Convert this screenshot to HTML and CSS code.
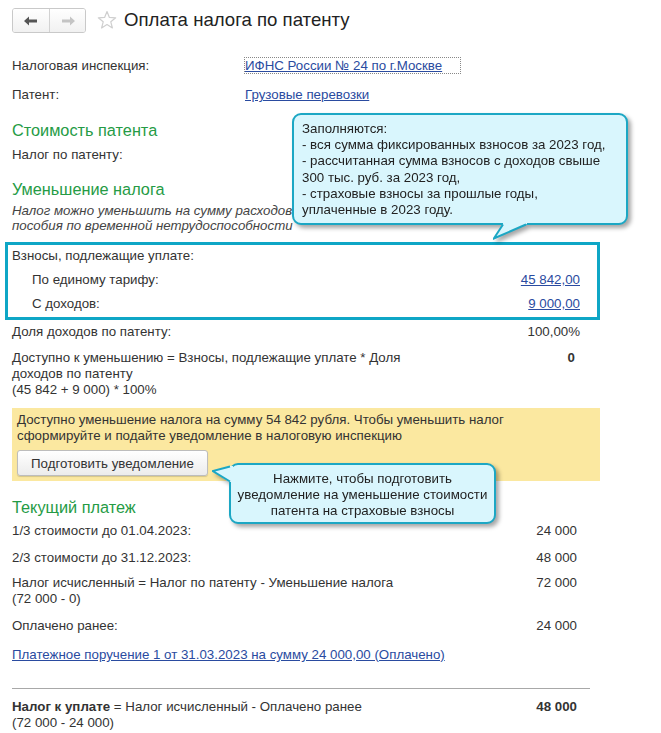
FILE: index.html
```html
<!DOCTYPE html>
<html lang="ru">
<head>
  <meta charset="UTF-8">
  <title>Оплата налога по патенту</title>
  <link rel="stylesheet" href="styles.css">
</head>
<body>
  <div class="page">
    <header class="head">
      <div class="nav">
        <button class="nav-btn">
          <svg width="14" height="10" viewBox="0 0 14 10"><path d="M0 5 L5 0.5 L5 3.5 L13 3.5 L13 6.5 L5 6.5 L5 9.5 Z" fill="#555"/></svg>
        </button>
        <button class="nav-btn">
          <svg width="14" height="10" viewBox="0 0 14 10"><path d="M14 5 L9 0.5 L9 3.5 L1 3.5 L1 6.5 L9 6.5 L9 9.5 Z" fill="#c4c4c4"/></svg>
        </button>
      </div>
      <svg class="star" width="20" height="20" viewBox="0 0 20 20"><path d="M10 1.5 L12.4 7.4 L18.7 7.8 L13.8 11.8 L15.4 18 L10 14.5 L4.6 18 L6.2 11.8 L1.3 7.8 L7.6 7.4 Z" fill="none" stroke="#cfcfcf" stroke-width="1.2" stroke-linejoin="round"/></svg>
      <h1 class="title">Оплата налога по патенту</h1>
    </header>

    <div class="form">
      <div class="field f-ifns">
        <span class="label">Налоговая инспекция:</span>
        <span class="focus"><a href="#" class="link">ИФНС России № 24 по г.Москве</a></span>
      </div>
      <div class="field f-patent">
        <span class="label">Патент:</span>
        <a href="#" class="link">Грузовые перевозки</a>
      </div>

      <h2 class="group h-cost">Стоимость патента</h2>
      <div class="row r-tax"><span>Налог по патенту:</span></div>

      <h2 class="group h-reduce">Уменьшение налога</h2>
      <p class="note">Налог можно уменьшить на сумму расходов<br>пособия по временной нетрудоспособности</p>

      <div class="hl">
        <div class="row">Взносы, подлежащие уплате:</div>
        <div class="row sub gap8"><span>По единому тарифу:</span><a href="#" class="link">45 842,00</a></div>
        <div class="row sub gap8"><span>С доходов:</span><a href="#" class="link">9 000,00</a></div>
      </div>

      <div class="row r-share"><span>Доля доходов по патенту:</span><span class="val">100,00%</span></div>
      <div class="row r-avail">
        <span>Доступно к уменьшению = Взносы, подлежащие уплате * Доля<br>доходов по патенту<br>(45 842 + 9 000) * 100%</span>
        <b class="val zero">0</b>
      </div>

      <div class="warn">
        <p>Доступно уменьшение налога на сумму 54 842 рубля. Чтобы уменьшить налог<br>сформируйте и подайте уведомление в налоговую инспекцию</p>
        <button class="btn">Подготовить уведомление</button>
      </div>

      <h2 class="group h-pay">Текущий платеж</h2>
      <div class="row r-1"><span>1/3 стоимости до 01.04.2023:</span><span class="val">24 000</span></div>
      <div class="row r-2"><span>2/3 стоимости до 31.12.2023:</span><span class="val">48 000</span></div>
      <div class="row r-3"><span>Налог исчисленный = Налог по патенту - Уменьшение налога<br>(72 000 - 0)</span><span class="val">72 000</span></div>
      <div class="row r-4"><span>Оплачено ранее:</span><span class="val">24 000</span></div>
      <div class="row r-link"><a href="#" class="link">Платежное поручение 1 от 31.03.2023 на сумму 24 000,00 (Оплачено)</a></div>
      <hr class="sep">
      <div class="row r-total"><span><b>Налог к уплате</b> = Налог исчисленный - Оплачено ранее<br>(72 000 - 24 000)</span><b class="val">48 000</b></div>
    </div>

    <!-- подсказки -->
    <div class="tip tip-top">
      Заполняются:<br>
      - вся сумма фиксированных взносов за 2023 год,<br>
      - рассчитанная сумма взносов с доходов свыше<br>
      300 тыс. руб. за 2023 год,<br>
      - страховые взносы за прошлые годы,<br>
      уплаченные в 2023 году.
      <svg class="tail tail-down" width="40" height="24" viewBox="0 0 40 24">
        <polygon points="10,0 10,3 0.5,18 34,3 34,0" fill="#d9f6fd"/>
        <polyline points="10,3.5 0.8,17.5 33,3.5" fill="none" stroke="#1ca7c4" stroke-width="2"/>
      </svg>
    </div>
    <div class="tip tip-btn">
      Нажмите, чтобы подготовить<br>
      уведомление на уменьшение стоимости<br>
      патента на страховые взносы
      <svg class="tail tail-left" width="24" height="22" viewBox="0 0 24 22">
        <polygon points="17,1 0.5,6 17,17 21,17 21,1" fill="#d9f6fd"/>
        <polyline points="18,1.5 0.8,6 18,16.5" fill="none" stroke="#1ca7c4" stroke-width="2"/>
      </svg>
    </div>
  </div>
</body>
</html>
```

FILE: styles.css
```css
* { box-sizing: border-box; margin: 0; padding: 0; }
body {
  background: #fff;
  font-family: "Liberation Sans", Arial, sans-serif;
  font-size: 13.3px;
  line-height: 16px;
  color: #333;
}
.page {
  position: relative;
  width: 661px;
  height: 733px;
  overflow: hidden;
}

/* шапка */
.head {
  height: 40px;
  display: flex;
  align-items: center;
  padding: 0 0 0 12px;
}
.nav {
  display: flex;
  height: 25px;
  margin-top: 1px;
  border: 1px solid #c9c9c9;
  border-radius: 3px;
  overflow: hidden;
}
.nav-btn {
  width: 36px;
  border: none;
  background: linear-gradient(#fff, #f1f1f1);
  display: flex;
  align-items: center;
  justify-content: center;
}
.nav-btn + .nav-btn { border-left: 1px solid #d2d2d2; }
.star { margin-left: 11px; }
.title {
  margin-left: 7px;
  font-size: 18.6px;
  font-weight: normal;
  color: #222;
}

/* форма */
.form {
  width: 580px;
  padding-left: 12px;
}
.field { display: flex; }
.label { width: 233px; }
.f-ifns { margin-top: 18px; }
.f-patent { margin-top: 13px; }
.focus {
  outline: 1px dotted #888;
  outline-offset: 0;
  width: 215px;
  height: 15px;
  line-height: 15px;
}
.link {
  color: #2a4ba0;
  text-decoration: underline;
}
.group {
  font-size: 16.3px;
  line-height: 20px;
  font-weight: normal;
  color: #259b45;
}
.h-cost { margin-top: 17px; }
.h-reduce { margin-top: 16px; }
.h-pay { margin-top: 16px; }
.row {
  display: flex;
  justify-content: space-between;
  align-items: flex-start;
}
.r-tax { margin-top: 7px; }
.note {
  margin-top: 4px;
  font-style: italic;
  line-height: 15px;
  color: #444;
}

/* рамка выделения */
.hl {
  margin: 9px 0 0 -7px;
  width: 595px;
  border: 3px solid #0ea6c6;
  padding: 3px 17px 5px 4px;
}
.sub { padding-left: 20px; }
.gap8 { margin-top: 8px; }

.r-share { margin-top: 4px; }
.r-avail { margin-top: 10px; }
.zero { margin-right: 5px; }

/* желтая панель */
.warn {
  margin-top: 10px;
  width: 588px;
  background: #fbe8a0;
  padding: 4px 5px 5px 5px;
}
.btn {
  margin-top: 6px;
  width: 191px;
  height: 26px;
  font-family: inherit;
  font-size: 13.3px;
  color: #333;
  background: linear-gradient(#fff, #ececec);
  border: 1px solid #bdbdbd;
  border-radius: 3px;
  box-shadow: 0 1px 1px rgba(0,0,0,.15);
}

.r-1 { margin-top: 6px; }
.r-2 { margin-top: 11px; }
.r-3 { margin-top: 9px; }
.r-4 { margin-top: 11px; }
.r-1 .val, .r-2 .val, .r-3 .val, .r-4 .val, .r-total .val { margin-right: 3px; }
.r-link { margin-top: 13px; }
.sep {
  margin-top: 25px;
  border: none;
  border-top: 1px solid #a8a8a8;
  width: 578px;
}
.r-total { margin-top: 10px; }

/* подсказки */
.tip {
  position: absolute;
  background: #d9f6fd;
  border: 2px solid #1ca7c4;
  border-radius: 9px;
  color: #222;
  filter: drop-shadow(3px 3px 2px rgba(0,0,0,.35));
}
.tip-top {
  left: 292px;
  top: 113px;
  width: 336px;
  height: 112px;
  padding: 6px 0 0 8px;
  line-height: 16.2px;
}
.tip-btn {
  left: 229px;
  top: 463px;
  width: 267px;
  height: 61px;
  padding-top: 6px;
  text-align: center;
}
.tail { position: absolute; }
.tail-down { left: 199px; top: 106px; }
.tail-left { left: -19px; top: 0; }
```
